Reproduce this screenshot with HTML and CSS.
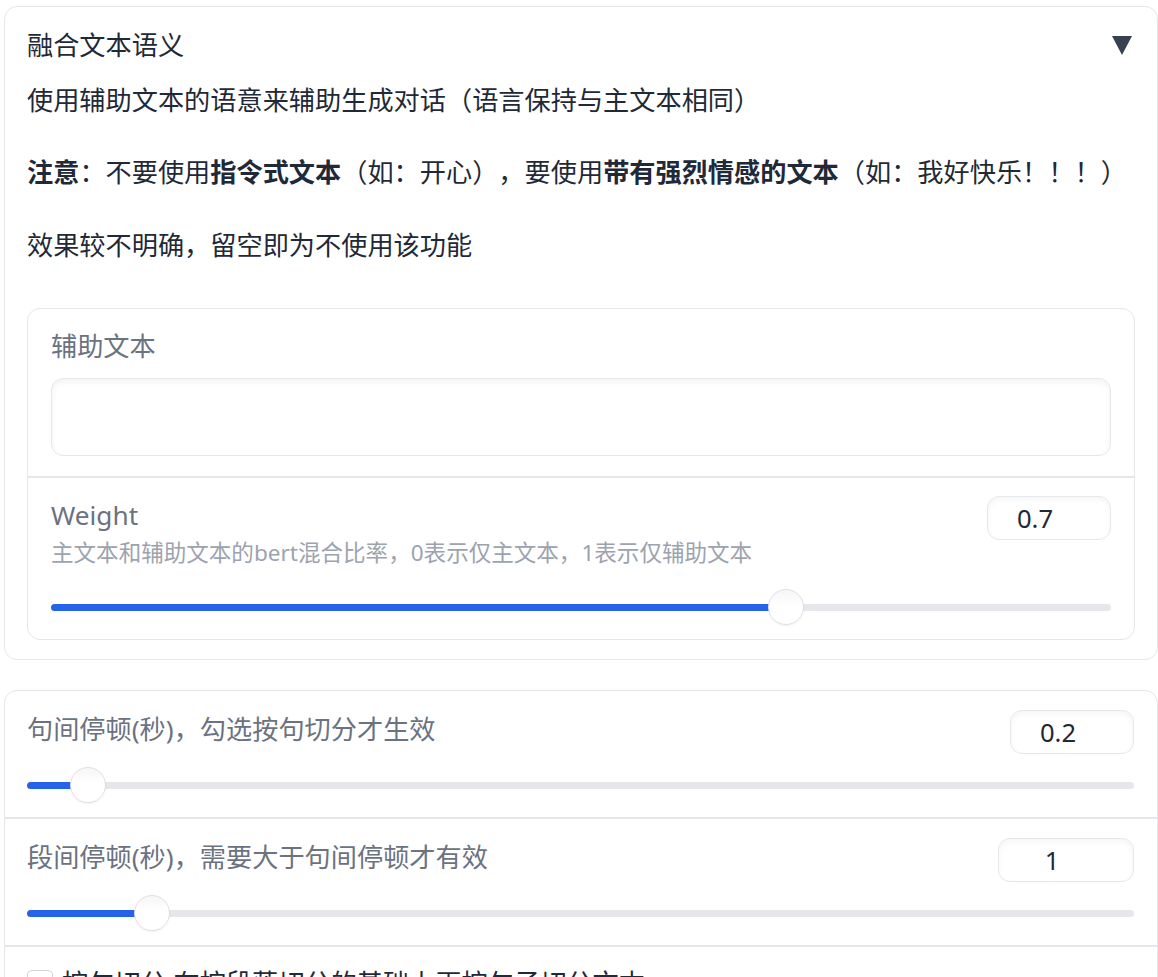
FILE: index.html
```html
<!DOCTYPE html>
<html lang="zh-CN">
<head>
<meta charset="utf-8">
<title>融合文本语义</title>
<link rel="stylesheet" href="styles.css">
</head>
<body>
<div class="page">
  <section class="card accordion">
    <div class="acc-head">
      <span class="acc-title">融合文本语义</span>
      <svg class="acc-icon" width="20" height="19" viewBox="0 0 20 19" aria-hidden="true"><polygon points="0,0 20,0 10,19" fill="#374151"/></svg>
    </div>
    <div class="prose">
      <p>使用辅助文本的语意来辅助生成对话（语言保持与主文本相同）</p>
      <p><strong>注意</strong>：不要使用<strong>指令式文本</strong>（如：开心），要使用<strong>带有强烈情感的文本</strong>（如：我好快乐！！！）</p>
      <p>效果较不明确，留空即为不使用该功能</p>
    </div>
    <div class="form">
      <div class="block text-block">
        <label class="label" for="aux">辅助文本</label>
        <textarea id="aux" class="textarea"></textarea>
      </div>
      <div class="block slider-block divided">
        <div class="slider-head">
          <div class="head-text">
            <div class="label">Weight</div>
            <div class="info">主文本和辅助文本的bert混合比率，0表示仅主文本，1表示仅辅助文本</div>
          </div>
          <input class="num" type="number" value="0.7" min="0" max="1" step="0.1">
        </div>
        <input class="range range-info" type="range" min="0" max="1" step="0.1" value="0.7" style="--fill: 69.3%">
      </div>
    </div>
  </section>

  <section class="card group">
    <div class="block row-block">
      <div class="slider-head">
        <div class="label">句间停顿(秒)，勾选按句切分才生效</div>
        <input class="num" type="number" value="0.2" min="0" max="5" step="0.1">
      </div>
      <input class="range" type="range" min="0" max="5" step="0.1" value="0.2" style="--fill: 5.5%">
    </div>
    <div class="block row-block divided">
      <div class="slider-head">
        <div class="label">段间停顿(秒)，需要大于句间停顿才有效</div>
        <input class="num num-wide" type="number" value="1" min="0" max="10" step="0.1">
      </div>
      <input class="range" type="range" min="0" max="10" step="0.1" value="1" style="--fill: 11.3%">
    </div>
    <div class="block check-block divided">
      <label class="check-label"><input class="checkbox" type="checkbox"><span>按句切分 在按段落切分的基础上再按句子切分文本</span></label>
    </div>
  </section>
</div>
</body>
</html>
```

FILE: styles.css
```css
html, body {
  margin: 0;
  padding: 0;
  background: #ffffff;
  overflow: hidden;
}

body {
  font-family: "Noto Sans", "Noto Sans CJK SC", sans-serif;
  font-size: 26.2px;
  color: #1f2937;
  text-spacing-trim: space-all;
}

.page {
  padding: 6px 0 0 4px;
  width: 1154px;
  display: flex;
  flex-direction: column;
  gap: 30px;
}

.card {
  box-sizing: border-box;
  width: 1154px;
  border: 1px solid #e5e7eb;
  border-radius: 13px;
  background: #ffffff;
}

.accordion {
  padding: 19px 22px 19px 22px;
}

.acc-head {
  display: flex;
  align-items: center;
  justify-content: space-between;
  height: 38px;
  line-height: 38px;
}

.acc-title {
  color: #1f2937;
}

.acc-icon {
  display: block;
  margin-right: 3px;
}

.prose {
  margin-top: 17px;
}

.prose p {
  margin: 0 0 34px 0;
  line-height: 38.4px;
}

.prose p:last-child {
  margin-bottom: 0;
}

.prose strong {
  font-weight: 700;
  color: #1f2937;
}

.form {
  margin-top: 44px;
  border: 1px solid #e5e7eb;
  border-radius: 13px;
  overflow: hidden;
}

.block {
  box-sizing: border-box;
}

.divided {
  border-top: 2px solid #e5e7eb;
}

.text-block {
  padding: 20px 23px 20px 23px;
  display: flex;
  flex-direction: column;
}

.label {
  color: #6b7280;
  line-height: 38px;
}

.text-block .label {
  line-height: 34px;
}

.textarea {
  box-sizing: border-box;
  display: block;
  margin-top: 15px;
  width: 100%;
  height: 78px;
  border: 1px solid #e5e7eb;
  border-radius: 12px;
  background: #ffffff;
  box-shadow: inset 0 3px 6px rgba(0, 0, 0, 0.05);
  resize: none;
  font: inherit;
  padding: 10px 16px;
  outline: none;
}

.slider-block {
  padding: 18px 23px 14px 23px;
}

.slider-head {
  display: flex;
  justify-content: space-between;
  align-items: flex-start;
}

.head-text {
  display: flex;
  flex-direction: column;
}

.info {
  color: #9ca3af;
  font-size: 22.55px;
  line-height: 38px;
}

.num {
  box-sizing: border-box;
  width: 124px;
  height: 44px;
  margin: 0;
  border: 1px solid #e5e7eb;
  border-radius: 12px;
  background: #ffffff;
  box-shadow: inset 0 3px 6px rgba(0, 0, 0, 0.04);
  font: inherit;
  font-size: 25.6px;
  color: #1f2937;
  text-align: center;
  padding: 0 36px 0 8px;
  outline: none;
  -moz-appearance: textfield;
}

.num::-webkit-inner-spin-button,
.num::-webkit-outer-spin-button {
  -webkit-appearance: none;
  margin: 0;
}

.num-wide {
  width: 136px;
}

.range {
  -webkit-appearance: none;
  appearance: none;
  display: block;
  width: 100%;
  height: 36px;
  margin: 13px 0 0 0;
  padding: 0;
  background: transparent;
}

.range-info {
  margin-top: 17px;
}

.range::-webkit-slider-runnable-track {
  height: 7px;
  border-radius: 4px;
  background: linear-gradient(to right, #2563eb var(--fill), #e5e7eb var(--fill));
}

.range::-webkit-slider-thumb {
  -webkit-appearance: none;
  appearance: none;
  box-sizing: border-box;
  width: 36px;
  height: 36px;
  margin-top: -14.5px;
  border-radius: 50%;
  border: 1px solid #e0e0e3;
  background: linear-gradient(to bottom, #f6f6f7, #ffffff 45%);
  box-shadow: 0 1px 2px rgba(0, 0, 0, 0.06);
}

.row-block {
  padding: 19px 23px 14px 22px;
}

.check-block {
  padding: 21px 22px 20px 22px;
}

.check-label {
  display: flex;
  align-items: center;
  gap: 9px;
  line-height: 30px;
  color: #1f2937;
}

.checkbox {
  -webkit-appearance: none;
  appearance: none;
  box-sizing: border-box;
  width: 26px;
  height: 26px;
  margin: 0;
  border: 1px solid #d1d5db;
  border-radius: 5px;
  background: #ffffff;
  box-shadow: 0 1px 2px rgba(0, 0, 0, 0.05);
}
```
